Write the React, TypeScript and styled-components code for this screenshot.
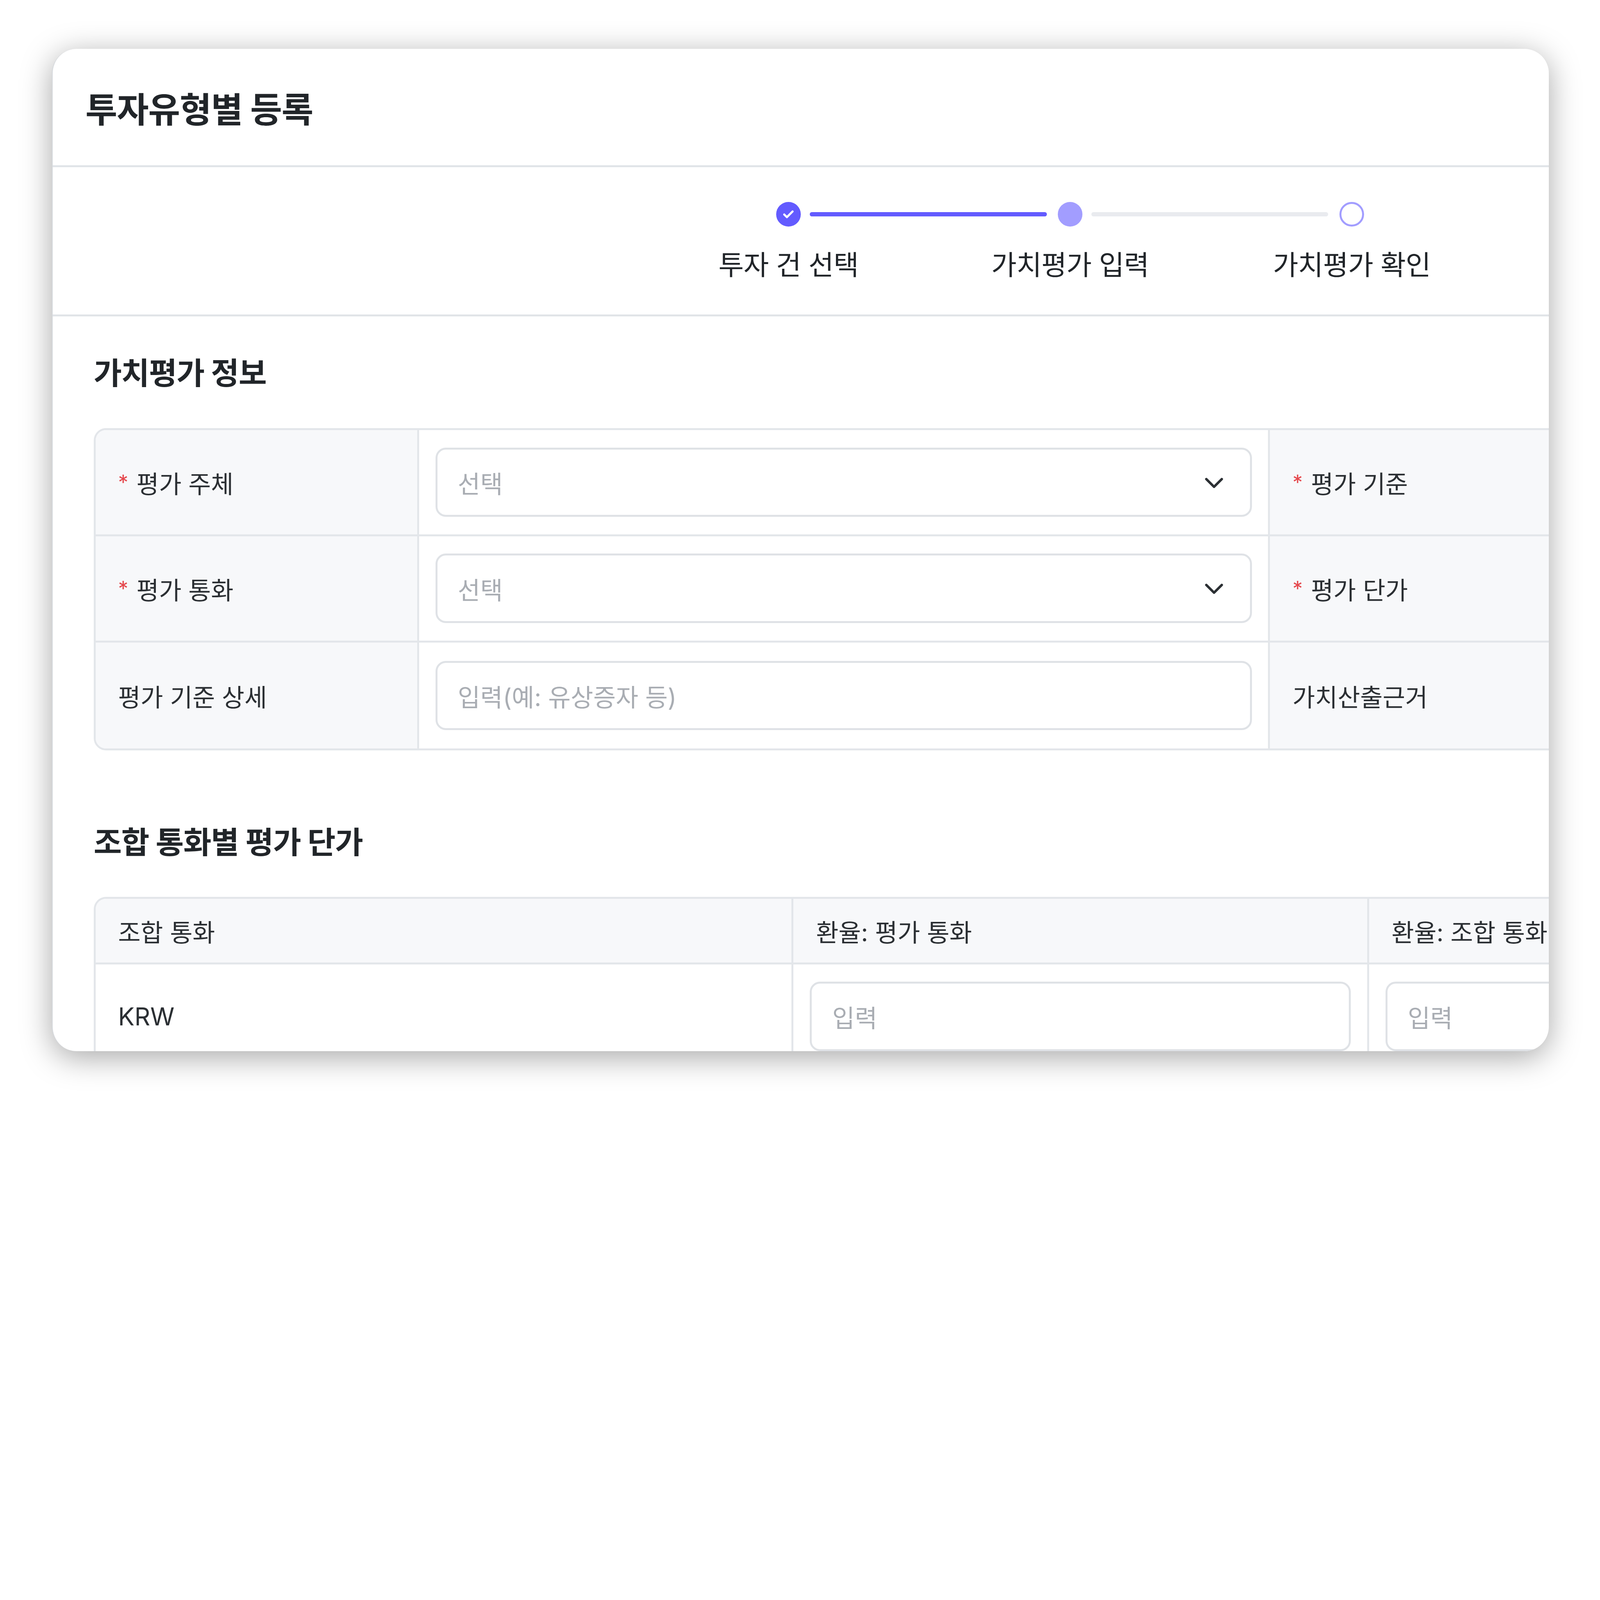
import React from 'react';
import styled, { createGlobalStyle } from 'styled-components';

const GlobalStyle = createGlobalStyle`
  html, body { margin: 0; padding: 0; background: #ffffff; overflow: hidden; }
  body { font-family: Inter, "Noto Sans CJK KR", sans-serif; color: #212529; }
`;

const Stage = styled.div`
  width: 1568px;
  height: 1083px;
  padding: 48px 50px 0 51px;
  box-sizing: border-box;
`;

const Card = styled.div`
  height: 982px;
  background: #fff;
  border-radius: 24px;
  box-shadow: 0 6px 30px rgba(0, 0, 0, 0.35);
  overflow: hidden;
  border-left: 1px solid #d7dade;
`;

const Header = styled.div`
  height: 116px;
  display: flex;
  align-items: center;
  padding-left: 32px;
  border-bottom: 2px solid #e1e4e8;
  box-sizing: border-box;
`;

const Title = styled.h1`
  margin: 0;
  font-size: 34px;
  font-weight: 700;
  letter-spacing: -0.5px;
`;

const StepperBar = styled.div`
  height: 146px;
  border-bottom: 2px solid #e1e4e8;
  box-sizing: border-box;
  display: flex;
  padding-left: 583px;
  padding-top: 34px;
`;

const Step = styled.div`
  width: 276px;
  display: flex;
  flex-direction: column;
  align-items: center;
  position: relative;
`;

const Dot = styled.div<{ $state: 'done' | 'current' | 'todo' }>`
  width: 24px;
  height: 24px;
  border-radius: 50%;
  box-sizing: border-box;
  display: flex;
  align-items: center;
  justify-content: center;
  background: ${({ $state }) => ($state === 'done' ? '#635bff' : $state === 'current' ? '#a29dff' : '#fff')};
  border: ${({ $state }) => ($state === 'todo' ? '2px solid #a29dff' : 'none')};
  z-index: 1;
`;

const Connector = styled.div<{ $active: boolean }>`
  position: absolute;
  top: 10px;
  left: calc(50% + 21px);
  width: 232px;
  height: 4px;
  border-radius: 2px;
  background: ${({ $active }) => ($active ? '#635bff' : '#e9ebef')};
`;

const StepLabel = styled.div`
  margin-top: 16px;
  font-size: 27px;
  letter-spacing: -0.3px;
`;

const Body = styled.div`
  padding: 32px 0 0 40px;
`;

const SectionTitle = styled.h2`
  margin: 0 0 34px;
  font-size: 30px;
  font-weight: 700;
  letter-spacing: -0.5px;
`;

const InfoTable = styled.div`
  width: 1500px;
  display: grid;
  grid-template-columns: 317px 834px 1fr;
  border: 2px solid #e3e6ea;
  border-radius: 12px;
  overflow: hidden;
  margin-bottom: 66px;
`;

const LabelCell = styled.div<{ $last?: boolean; $h?: number }>`
  height: ${({ $h }) => $h ?? 104}px;
  box-sizing: border-box;
  background: #f7f8fa;
  display: flex;
  align-items: center;
  padding-left: 22px;
  font-size: 24px;
  color: #2b2f33;
  white-space: nowrap;
  border-bottom: ${({ $last }) => ($last ? 'none' : '2px solid #e3e6ea')};
  border-right: 2px solid #e3e6ea;
`;

const ValueCell = styled.div<{ $last?: boolean; $h?: number }>`
  height: ${({ $h }) => $h ?? 104}px;
  box-sizing: border-box;
  display: flex;
  align-items: center;
  padding: 0 16px;
  border-bottom: ${({ $last }) => ($last ? 'none' : '2px solid #e3e6ea')};
  border-right: 2px solid #e3e6ea;
`;

const Required = styled.span`
  color: #e5484d;
  margin-right: 8px;
  font-size: 20px;
`;

const Field = styled.div`
  flex: 1;
  height: 68px;
  box-sizing: border-box;
  border: 2px solid #dfe2e6;
  border-radius: 10px;
  display: flex;
  align-items: center;
  justify-content: space-between;
  padding: 0 22px 0 20px;
  font-size: 24px;
  color: #a9adb3;
`;

const Chevron = () => (
  <svg width="26" height="26" viewBox="0 0 24 24" fill="none" stroke="#2b2f33" strokeWidth="2.2" strokeLinecap="round" strokeLinejoin="round">
    <path d="M5 9l7 7 7-7" />
  </svg>
);

const RateTable = styled.div`
  width: 1500px;
  display: grid;
  grid-template-columns: 684px 564px 1fr;
  border: 2px solid #e3e6ea;
  border-bottom: none;
  border-radius: 12px 12px 0 0;
  overflow: hidden;
`;

const PlainCell = styled(ValueCell)`
  padding-left: 22px;
  font-size: 24px;
  color: #2b2f33;
`;

const App: React.FC = () => {
  const scale = typeof window !== 'undefined' ? window.innerWidth / 1568 : 1;
  const steps: { label: string; state: 'done' | 'current' | 'todo' }[] = [
    { label: '투자 건 선택', state: 'done' },
    { label: '가치평가 입력', state: 'current' },
    { label: '가치평가 확인', state: 'todo' },
  ];

  return (
    <>
      <GlobalStyle />
      <Stage style={{ zoom: scale }}>
        <Card>
          <Header>
            <Title>투자유형별 등록</Title>
          </Header>

          <StepperBar>
            {steps.map((s, i) => (
              <Step key={s.label}>
                <Dot $state={s.state}>
                  {s.state === 'done' && (
                    <svg width="14" height="14" viewBox="0 0 24 24" fill="none" stroke="#fff" strokeWidth="3.5" strokeLinecap="round" strokeLinejoin="round">
                      <path d="M5 12.5l4.5 4.5L19 7.5" />
                    </svg>
                  )}
                </Dot>
                {i < steps.length - 1 && <Connector $active={s.state === 'done'} />}
                <StepLabel>{s.label}</StepLabel>
              </Step>
            ))}
          </StepperBar>

          <Body>
            <SectionTitle>가치평가 정보</SectionTitle>
            <InfoTable>
              <LabelCell><Required>*</Required>평가 주체</LabelCell>
              <ValueCell><Field>선택<Chevron /></Field></ValueCell>
              <LabelCell><Required>*</Required>평가 기준</LabelCell>

              <LabelCell><Required>*</Required>평가 통화</LabelCell>
              <ValueCell><Field>선택<Chevron /></Field></ValueCell>
              <LabelCell><Required>*</Required>평가 단가</LabelCell>

              <LabelCell $last>평가 기준 상세</LabelCell>
              <ValueCell $last><Field>입력(예: 유상증자 등)</Field></ValueCell>
              <LabelCell $last>가치산출근거</LabelCell>
            </InfoTable>

            <SectionTitle>조합 통화별 평가 단가</SectionTitle>
            <RateTable>
              <LabelCell $h={64}>조합 통화</LabelCell>
              <LabelCell $h={64}>환율: 평가 통화</LabelCell>
              <LabelCell $h={64}>환율: 조합 통화</LabelCell>

              <PlainCell>KRW</PlainCell>
              <ValueCell><Field>입력</Field></ValueCell>
              <ValueCell><Field>입력</Field></ValueCell>
            </RateTable>
          </Body>
        </Card>
      </Stage>
    </>
  );
};

export default App;
